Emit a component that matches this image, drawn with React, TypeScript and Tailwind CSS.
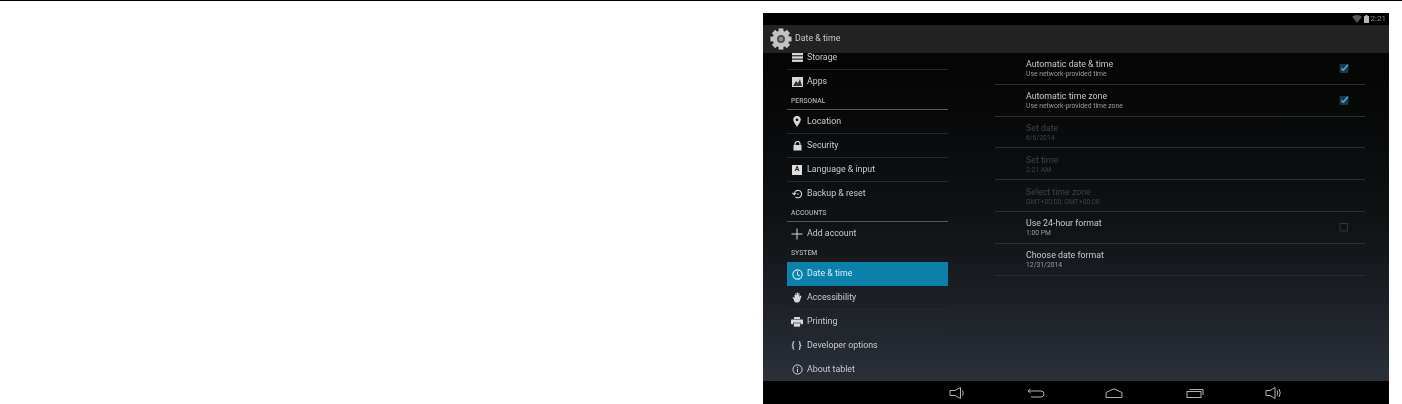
import React from "react";

const Nav = ({ children, label, active, line = true }: { children: React.ReactNode; label: string; active?: boolean; line?: boolean }) => (
  <div className={`h-6 flex items-center shrink-0 ${active ? "bg-[#0a80ab]" : line ? "border-b border-[#25282c]" : "border-b border-transparent"}`}>
    <div className="w-5 flex justify-center items-center shrink-0">{children}</div>
    <span className={`text-[8.8px] ${active ? "text-[#d8eef6]" : "text-[#c9cacb]"}`}>{label}</span>
  </div>
);

const Header = ({ label, line = true }: { label: string; line?: boolean }) => (
  <div className={`h-4 flex items-center shrink-0 px-[4px] text-[6.8px] font-medium text-[#a8a9aa] border-b ${line ? "border-[#55585b]" : "border-transparent"}`}>{label}</div>
);

const Box = ({ checked }: { checked?: boolean }) => (
  <svg width="12" height="12" viewBox="0 0 12 12" className="shrink-0 mt-[-1px] ml-auto">
    {checked ? (
      <>
        <rect x="2" y="2.5" width="8" height="8" fill="#1c3a48" stroke="#2d4a57" strokeWidth="0.5" />
        <path d="M3.5 6.5 L5.2 8.2 L10 2.8" fill="none" stroke="#35b5e5" strokeWidth="1.6" />
      </>
    ) : (
      <rect x="2" y="2.5" width="7.5" height="7.5" fill="none" stroke="#3b3f44" strokeWidth="0.8" />
    )}
  </svg>
);

const Row = ({ title, sub, box, dim }: { title: string; sub: string; box?: "on" | "off"; dim?: boolean }) => (
  <div className="h-[31.8px] shrink-0 border-b border-[#2b2e32] flex items-center pl-[31px] pr-[15px] justify-between">
    <div className="flex flex-col pt-[1px]">
      <span className={`text-[8.8px] leading-[12px] ${dim ? "text-[#3f4144]" : "text-[#c6c7c8]"}`}>{title}</span>
      <span className={`text-[6.8px] leading-[9px] ${dim ? "text-[#3f4144]" : "text-[#9a9b9c]"}`}>{sub}</span>
    </div>
    {box && <Box checked={box === "on"} />}
  </div>
);

const c = "#d6d7d8";

export default function App() {
  return (
    <div className="w-[1402px] h-[404px] bg-white overflow-hidden font-['Roboto',sans-serif]">
      <div className="h-px bg-black" />
      <div className="ml-[763px] mt-[12px] w-[626px] h-[391px] flex flex-col bg-black blur-[0.3px]">
        <div className="h-3 shrink-0 bg-black flex items-center justify-end pr-[3px] gap-[2px]">
          <svg width="10" height="8" viewBox="0 0 10 8"><path d="M0 1.5 Q5 -1.5 10 1.5 L5 8Z" fill="#55585b" /></svg>
          <svg width="5" height="8" viewBox="0 0 5 8"><path d="M1.5 0H3.5V1H5V8H0V1H1.5Z" fill="#b5b6b7" /></svg>
          <span className="text-[8px] leading-none text-[#8d8e8f]">2:21</span>
        </div>
        <div className="h-7 shrink-0 bg-[#222222] flex items-center pl-[7px] gap-[3px] relative z-10">
          <svg width="22" height="22" viewBox="0 0 20 20" className="shrink-0">
            <g fill="#c2c2c0">
              <circle cx="10" cy="10" r="7.6" />
              {[0, 45, 90, 135, 180, 225, 270, 315].map((a) => (
                <rect key={a} x="7.8" y="0.4" width="4.4" height="4" transform={`rotate(${a} 10 10)`} />
              ))}
            </g>
            <circle cx="10" cy="10" r="3.6" fill="#4a4a48" />
            <circle cx="10" cy="10" r="2" fill="#8a8a88" />
          </svg>
          <span className="text-[8.8px] text-[#c8c8c8]">Date &amp; time</span>
        </div>
        <div className="flex-1 min-h-0 flex overflow-hidden bg-gradient-to-b from-[#050505] via-[#0f1113] to-[#2a303a]">
          <div className="w-[161px] ml-[24px] shrink-0 flex flex-col mt-[-7px]">
            <Nav label="Storage">
              <svg width="11" height="9" viewBox="0 0 11 9" fill={c}><rect y="0" width="11" height="2.3" /><rect y="3.3" width="11" height="2.3" /><rect y="6.6" width="11" height="2.3" /></svg>
            </Nav>
            <Nav label="Apps" line={false}>
              <svg width="11" height="10" viewBox="0 0 11 10"><rect width="11" height="10" fill={c} /><path d="M1 9L4 4L6 6L8 2L10 9Z" fill="#333" /></svg>
            </Nav>
            <Header label="PERSONAL" />
            <Nav label="Location">
              <svg width="8" height="11" viewBox="0 0 8 11"><path d="M4 0A3.8 3.8 0 0 1 7.8 3.8C7.8 6 5 9 4 11C3 9 .2 6 .2 3.8A3.8 3.8 0 0 1 4 0Z" fill={c} /><circle cx="4" cy="3.8" r="1.4" fill="#111" /></svg>
            </Nav>
            <Nav label="Security">
              <svg width="9" height="10" viewBox="0 0 9 10"><path d="M2 4V3A2.5 2.5 0 0 1 7 3V4" fill="none" stroke={c} strokeWidth="1.2" /><rect x="0.5" y="4" width="8" height="5.5" fill={c} /></svg>
            </Nav>
            <Nav label="Language & input">
              <div className="w-[10px] h-[10px] bg-[#dddddd] flex items-center justify-center text-[7px] font-bold leading-none text-[#222]">A</div>
            </Nav>
            <Nav label="Backup & reset" line={false}>
              <svg width="11" height="10" viewBox="0 0 11 10" fill="none" stroke={c} strokeWidth="1.1"><path d="M2.2 5A3.7 3.7 0 1 1 3.6 8" /><path d="M0.4 3.8L2.2 5.8L4 3.8" /><circle cx="6" cy="5" r=".8" fill={c} stroke="none" /></svg>
            </Nav>
            <Header label="ACCOUNTS" />
            <Nav label="Add account" line={false}>
              <svg width="12" height="12" viewBox="0 0 12 12" stroke={c} strokeWidth="1"><path d="M6 .5V11.5M.5 6H11.5" /></svg>
            </Nav>
            <Header label="SYSTEM" line={false} />
            <Nav label="Date & time" active>
              <svg width="11" height="11" viewBox="0 0 11 11" fill="none" stroke="#d8eef6" strokeWidth="1.1"><circle cx="5.5" cy="5.5" r="4.6" /><path d="M5.5 2.6V5.7L7.6 7" /></svg>
            </Nav>
            <Nav label="Accessibility">
              <svg width="11" height="11" viewBox="0 0 11 11" fill={c}><path d="M2.5 3h1v-2h1v2h.5V.5h1V3h.5V1h1v4l1-1.5 1 .5-1.5 4.5a2.5 2.5 0 0 1-2 2H4.5A2.5 2.5 0 0 1 2 8L.5 5.5l1-.5 1 1.2Z" /></svg>
            </Nav>
            <Nav label="Printing">
              <svg width="12" height="10" viewBox="0 0 12 10"><rect x="3" width="6" height="2" fill={c} /><rect y="2.6" width="12" height="4.6" rx=".6" fill={c} /><rect x="2.6" y="6" width="6.8" height="4" fill={c} stroke="#15171a" strokeWidth=".6" /></svg>
            </Nav>
            <Nav label="Developer options">
              <span className="text-[9px] leading-none font-bold text-[#d6d7d8] tracking-[1px]">{"{ }"}</span>
            </Nav>
            <Nav label="About tablet" line={false}>
              <svg width="11" height="11" viewBox="0 0 11 11" fill="none" stroke={c} strokeWidth="1"><circle cx="5.5" cy="5.5" r="4.6" /><path d="M5.5 4.8V8.2M5.5 2.8V3.8" /></svg>
            </Nav>
          </div>
          <div className="w-[370px] ml-[47px] shrink-0 flex flex-col">
            <Row title="Automatic date & time" sub="Use network-provided time" box="on" />
            <Row title="Automatic time zone" sub="Use network-provided time zone" box="on" />
            <Row title="Set date" sub="6/6/2014" dim />
            <Row title="Set time" sub="2:21 AM" dim />
            <Row title="Select time zone" sub="GMT+00:00, GMT+00:00" dim />
            <Row title="Use 24-hour format" sub="1:00 PM" box="off" />
            <Row title="Choose date format" sub="12/31/2014" />
          </div>
        </div>
        <div className="h-[23px] shrink-0 bg-black flex items-center pl-[186px] text-[#b0b1b2]">
          <svg width="16" height="14" viewBox="0 0 16 14" fill="none" stroke="currentColor" strokeWidth="1"><path d="M1 4.5H6L11.5 1.5V12.5L6 9.5H1Z" /><path d="M13.5 4.5Q15 7 13.5 9.5" /></svg>
          <svg className="ml-[62px]" width="18" height="10" viewBox="0 0 18 10" fill="none" stroke="currentColor" strokeWidth="1"><path d="M1 3H14A3 3 0 0 1 14 9H4" /><path d="M3.5 0.8L1 3L3.5 5" /></svg>
          <svg className="ml-[60px]" width="18" height="10" viewBox="0 0 18 10" fill="none" stroke="currentColor" strokeWidth="1"><path d="M1 4.5L9 .8L17 4.5V9.5H1Z" /></svg>
          <svg className="ml-[63px]" width="18" height="11" viewBox="0 0 18 11" fill="none" stroke="currentColor" strokeWidth="1"><rect x="1" y="4.5" width="14" height="6" /><path d="M3.5 2.5H17V8" /></svg>
          <svg className="ml-[61px]" width="17" height="14" viewBox="0 0 17 14" fill="none" stroke="currentColor" strokeWidth="1"><path d="M1 4.5H5L10 1.5V12.5L5 9.5H1Z" /><path d="M12 4.5Q13.5 7 12 9.5M14 3Q16.5 7 14 11" /></svg>
        </div>
      </div>
    </div>
  );
}
